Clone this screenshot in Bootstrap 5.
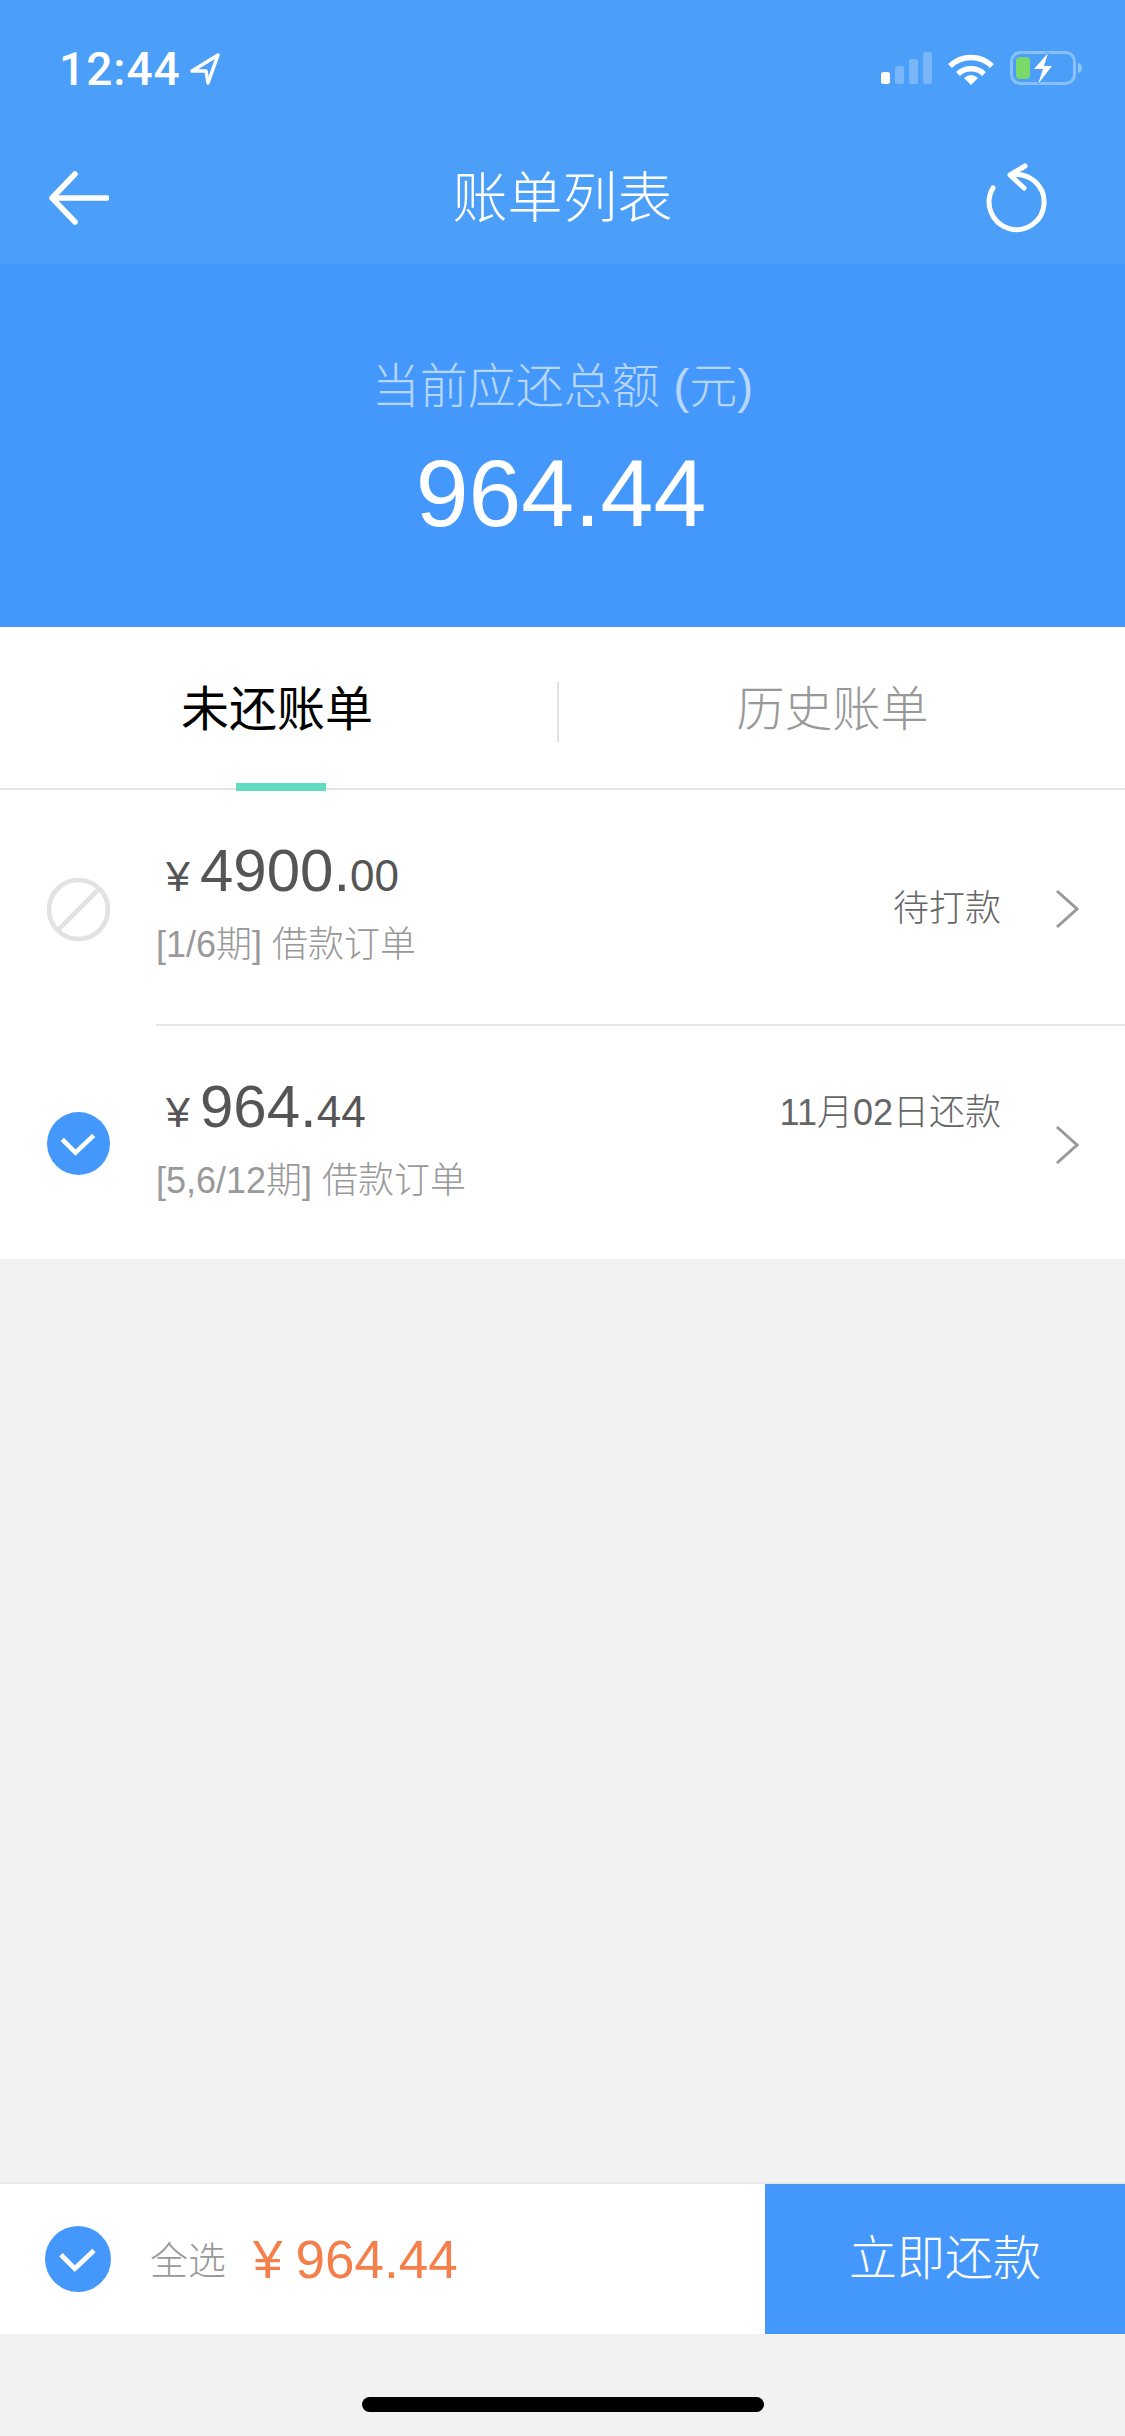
<!DOCTYPE html>
<html lang="zh-CN">

<head>
    <meta charset="UTF-8">
    <meta name="viewport" content="width=device-width, initial-scale=1.0">
    <title>账单列表</title>
    <link href="https://cdn.jsdelivr.net/npm/bootstrap@5.3.2/dist/css/bootstrap.min.css" rel="stylesheet">
    <style>
        body {
            background: #f2f2f2;
            font-family: "Liberation Sans", "Noto Sans CJK SC", sans-serif;
        }

        .app-screen { width: 1125px; height: 2436px; overflow: hidden; }

        .top-area { background: #4c9ff8; height: 264px; }
        .status-strip { height: 138px; padding: 0 42px 0 59px; }
        .clock-text { font-family: Roboto, "Liberation Sans", sans-serif; font-size: 46px; font-weight: 500; line-height: 1; letter-spacing: 1px; color: #fff; }
        .nav-strip { height: 126px; padding: 0 49px 6px 49px; }
        .nav-side { flex: 1 1 0; }
        .nav-refresh { margin-right: 21px; }
        .nav-title { font-size: 55px; font-weight: 300; line-height: 1; color: #fff; }

        .hero-area { background: #4598fb; height: 363px; padding-top: 90px; }
        .hero-label { font-size: 48px; line-height: 66px; color: #b6d6fc; font-weight: 300; }
        .hero-amount { font-size: 95px; line-height: 110px; margin-top: 18px; padding-right: 3px; color: #fff; }

        .tab-strip { height: 163px; padding-right: 16px; border-bottom: 2px solid #e4e4e4; }
        .tab-cell { height: 161px; font-size: 48px; font-weight: 300; color: #999; padding-top: 4px; padding-right: 3px; }
        .tab-cell-first { width: 557px; flex: none; color: #000; border-right: 0; font-weight: 400; }
        .tab-split { width: 2px; height: 60px; background: #e2e2e2; margin-top: 8px; }
        .tab-mark { position: absolute; left: 236px; bottom: -3px; width: 90px; height: 8px; background: #62dcc0; }

        .bill-list { background: #fff; }
        .bill-row { height: 236px; }
        .bill-row-last { height: 233px; }
        .bill-check { width: 156px; flex: none; padding-left: 47px; padding-top: 2px; }
        .bill-body { border-bottom: 2px solid #e6e6e6; padding-right: 46px; }
        .bill-row-last .bill-body { border-bottom: 0; }
        .bill-amount { font-size: 60px; line-height: 70px; color: #555; padding-top: 46px; padding-left: 10px; }
        .bill-cents { font-size: 44px; }
        .bill-yen { font-size: 43px; margin-right: 10px; }
        .bill-sub { font-size: 36px; line-height: 44px; color: #999; font-weight: 300; margin-top: 12px; }
        .bill-side { padding-top: 4px; }
        .bill-status { font-size: 36px; color: #666; font-weight: 300; margin-right: 54px; line-height: 44px; }
        .bill-status-top { align-self: flex-start; margin-top: 61px; }
        .bill-filler { background: #f2f2f2; }

        .check-round { width: 63px; height: 63px; }

        .pay-bar { height: 152px; background: #fff; border-top: 2px solid #e8e8e8; }
        .pay-left { padding-left: 45px; }
        .pay-all { font-size: 38px; font-weight: 300; color: #999; margin-left: 39px; padding-top: 5px; }
        .pay-total { font-size: 53px; color: #f47f4a; margin-left: 27px; line-height: 1; }
        .pay-yen { margin-right: 13px; }
        .pay-btn { width: 360px; height: 150px; background: #4598fb; color: #fff; font-size: 48px; font-weight: 300; border: 0; border-radius: 0; padding: 0; }
        .pay-btn:hover { background: #4598fb; color: #fff; }

        .home-zone { height: 102px; padding-top: 63px; }
        .home-pill { width: 402px; height: 15px; background: #000; border-radius: 8px; }
    </style>
</head>

<body>
    <div class="app-screen d-flex flex-column">
        <div class="top-area">
            <div class="status-strip d-flex align-items-center justify-content-between">
                <div class="d-flex align-items-center gap-2">
                    <span class="clock-text">12:44</span>
                    <svg width="32" height="34" viewBox="0 0 32 34" fill="none" stroke="#fff" stroke-width="3.5" stroke-linejoin="round">
                        <path d="M29 3 3 19h14l2 12z" />
                    </svg>
                </div>
                <div class="d-flex align-items-center">
                    <!-- signal -->
                    <svg width="51" height="34" viewBox="0 0 51 34" fill="#fff">
                        <rect x="0" y="20" width="9" height="12" rx="2.5" />
                        <rect x="14" y="14" width="9" height="18" rx="2.5" opacity=".25" />
                        <rect x="28" y="7" width="9" height="25" rx="2.5" opacity=".25" />
                        <rect x="42" y="0" width="9" height="32" rx="2.5" opacity=".25" />
                    </svg>
                    <!-- wifi -->
                    <svg class="ms-3" width="46" height="34" viewBox="0 0 46 34" fill="none" stroke="#fff" stroke-width="5.5">
                        <path d="M2 14A30 30 0 0 1 44 14" />
                        <path d="M10 22A19 19 0 0 1 36 22" />
                        <path d="M16 26Q23 20 30 26L23 33Z" fill="#fff" stroke="none" />
                    </svg>
                    <!-- battery -->
                    <svg class="ms-3" width="73" height="36" viewBox="0 0 73 36">
                        <rect x="1.5" y="1.5" width="63" height="31" rx="9" fill="none" stroke="#fff" stroke-opacity=".35" stroke-width="3" />
                        <path d="M68 12q4 1 4 5t-4 5z" fill="#fff" fill-opacity=".4" />
                        <rect x="6" y="6" width="14" height="22" rx="4" fill="#7bd96a" />
                        <path d="M38 2 24 18h9l-5 15 14-18h-8z" fill="#fff" stroke="#4c9ff8" stroke-width="2" paint-order="stroke" />
                    </svg>
                </div>
            </div>
            <div class="nav-strip d-flex align-items-center justify-content-between">
                <div class="nav-side d-flex">
                    <svg width="60" height="54" viewBox="0 0 60 54" fill="none" stroke="#fff" stroke-width="5.5" stroke-linecap="round" stroke-linejoin="round">
                        <path d="M26 3 3 27l23 24M4 27h54" />
                    </svg>
                </div>
                <div class="nav-title">账单列表</div>
                <div class="nav-side d-flex justify-content-end">
                    <svg class="nav-refresh" width="75" height="75" viewBox="0 0 75 75" fill="none" stroke="#fff" stroke-width="5" stroke-linecap="round" stroke-linejoin="round">
                        <path d="M13 27A27.5 27.5 0 1 0 32 14" />
                        <path d="M45 5 30 14l14 13" />
                    </svg>
                </div>
            </div>
        </div>

        <div class="hero-area text-center">
            <div class="hero-label">当前应还总额 (元)</div>
            <div class="hero-amount">964.44</div>
        </div>

        <div class="tab-strip bg-white d-flex position-relative">
            <div class="tab-cell tab-cell-first d-flex align-items-center justify-content-center">未还账单</div>
            <div class="d-flex align-items-center"><div class="tab-split"></div></div>
            <div class="tab-cell flex-fill d-flex align-items-center justify-content-center">历史账单</div>
            <div class="tab-mark"></div>
        </div>

        <div class="bill-list">
            <div class="bill-row d-flex">
                <div class="bill-check d-flex align-items-center">
                    <svg class="check-round" viewBox="0 0 62 62" fill="none" stroke="#e2e2e2" stroke-width="4.5">
                        <circle cx="31" cy="31" r="29" />
                        <path d="M11 51 51 11" />
                    </svg>
                </div>
                <div class="bill-body flex-fill d-flex justify-content-between">
                    <div>
                        <div class="bill-amount"><span class="bill-yen">¥</span>4900.<span class="bill-cents">00</span></div>
                        <div class="bill-sub">[1/6期] 借款订单</div>
                    </div>
                    <div class="bill-side d-flex align-items-center">
                        <span class="bill-status">待打款</span>
                        <svg width="24" height="40" viewBox="0 0 24 40" fill="none" stroke="#999" stroke-width="3">
                            <path d="M2 2 22 20 2 38" />
                        </svg>
                    </div>
                </div>
            </div>
            <div class="bill-row bill-row-last d-flex">
                <div class="bill-check d-flex align-items-center">
                    <svg class="check-round" viewBox="0 0 62 62" fill="none">
                        <circle cx="31" cy="31" r="31" fill="#4598fb" />
                        <path d="M15 27 28 40 46 23" stroke="#fff" stroke-width="4.5" />
                    </svg>
                </div>
                <div class="bill-body flex-fill d-flex justify-content-between">
                    <div>
                        <div class="bill-amount"><span class="bill-yen">¥</span>964.<span class="bill-cents">44</span></div>
                        <div class="bill-sub">[5,6/12期] 借款订单</div>
                    </div>
                    <div class="bill-side d-flex align-items-center">
                        <span class="bill-status bill-status-top">11月02日还款</span>
                        <svg width="24" height="40" viewBox="0 0 24 40" fill="none" stroke="#999" stroke-width="3">
                            <path d="M2 2 22 20 2 38" />
                        </svg>
                    </div>
                </div>
            </div>
        </div>

        <div class="bill-filler flex-grow-1"></div>

        <div class="pay-bar d-flex justify-content-between">
            <div class="pay-left d-flex align-items-center">
                <svg width="66" height="66" viewBox="0 0 62 62" fill="none">
                    <circle cx="31" cy="31" r="31" fill="#4598fb" />
                    <path d="M15 27 28 40 46 23" stroke="#fff" stroke-width="4.5" />
                </svg>
                <span class="pay-all">全选</span>
                <span class="pay-total"><span class="pay-yen">¥</span>964.44</span>
            </div>
            <button type="button" class="btn pay-btn">立即还款</button>
        </div>

        <div class="home-zone d-flex justify-content-center">
            <div class="home-pill"></div>
        </div>
    </div>
    <script src="https://cdn.jsdelivr.net/npm/bootstrap@5.3.2/dist/js/bootstrap.bundle.min.js"></script>
</body>

</html>
